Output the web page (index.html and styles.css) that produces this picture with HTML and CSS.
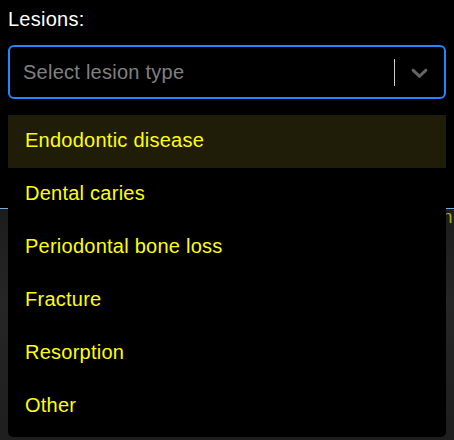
FILE: index.html
```html
<!DOCTYPE html>
<html lang="en">
<head>
<meta charset="utf-8">
<title>Lesions</title>
<link rel="stylesheet" href="styles.css">
</head>
<body>
<div class="panel">
  <div class="label">Lesions:</div>
  <div class="select-wrap">
    <div class="control">
      <div class="value"><span class="placeholder">Select lesion type</span></div>
      <div class="indicators">
        <span class="separator"></span>
        <span class="dropdown">
          <svg class="chevron" viewBox="0 0 20 20" aria-hidden="true"><path d="M4.516 7.548c0.436-0.446 1.043-0.481 1.576 0l3.908 3.747 3.908-3.747c0.533-0.481 1.141-0.446 1.574 0 0.436 0.445 0.408 1.197 0 1.615-0.406 0.418-4.695 4.502-4.695 4.502-0.217 0.223-0.502 0.335-0.787 0.335s-0.57-0.112-0.789-0.335c0 0-4.287-4.084-4.695-4.502s-0.436-1.17 0-1.615z"></path></svg>
        </span>
      </div>
    </div>
    <div class="menu">
      <div class="option focused">Endodontic disease</div>
      <div class="option">Dental caries</div>
      <div class="option">Periodontal bone loss</div>
      <div class="option">Fracture</div>
      <div class="option">Resorption</div>
      <div class="option">Other</div>
    </div>
  </div>
</div>
<div class="viewer">
  <span class="annot">n</span>
</div>
</body>
</html>
```
FILE: styles.css
```css
html, body {
  margin: 0;
  padding: 0;
  background: #000;
}
body {
  font-family: "Liberation Sans", Arial, Helvetica, sans-serif;
  font-size: 20px;
  letter-spacing: 0.25px;
  color: #fff;
  overflow: hidden;
  height: 440px;
}
.panel {
  padding: 8px 8px 0;
  position: relative;
  z-index: 2;
}
.label {
  line-height: 23px;
  color: #fff;
}
.select-wrap {
  position: relative;
  margin-top: 14px;
}
.control {
  box-sizing: border-box;
  height: 54px;
  border: 2px solid #2684ff;
  border-radius: 6px;
  background: #000;
  display: flex;
  align-items: center;
}
.value {
  flex: 1;
  padding-left: 13px;
  line-height: 23px;
}
.placeholder {
  color: #808080;
}
.indicators {
  display: flex;
  align-items: center;
  align-self: stretch;
}
.separator {
  width: 1px;
  height: 27px;
  background: #cccccc;
}
.dropdown {
  display: flex;
  padding: 0 11px 0 11px;
}
.chevron {
  width: 27px;
  height: 27px;
  fill: #666666;
  display: block;
}
.menu {
  position: absolute;
  top: calc(100% + 12px);
  left: 0;
  right: 0;
  background: #000;
  border-radius: 5px;
  padding: 4px 0;
}
.option {
  padding: 14px 17px 16px;
  line-height: 23px;
  color: #ffff00;
}
.option.focused {
  background: #1f1d08;
}
.viewer {
  position: relative;
  z-index: 1;
  margin-top: 109px;
  height: 232px;
  border-top: 1px solid #78a9dc;
  background: linear-gradient(180deg, #1c1c1c 0%, #262626 40%, #1e1e1e 100%);
}
.annot {
  position: absolute;
  top: -2px;
  left: 442px;
  font-size: 19px;
  line-height: 19px;
  color: #aaa71c;
}
```
